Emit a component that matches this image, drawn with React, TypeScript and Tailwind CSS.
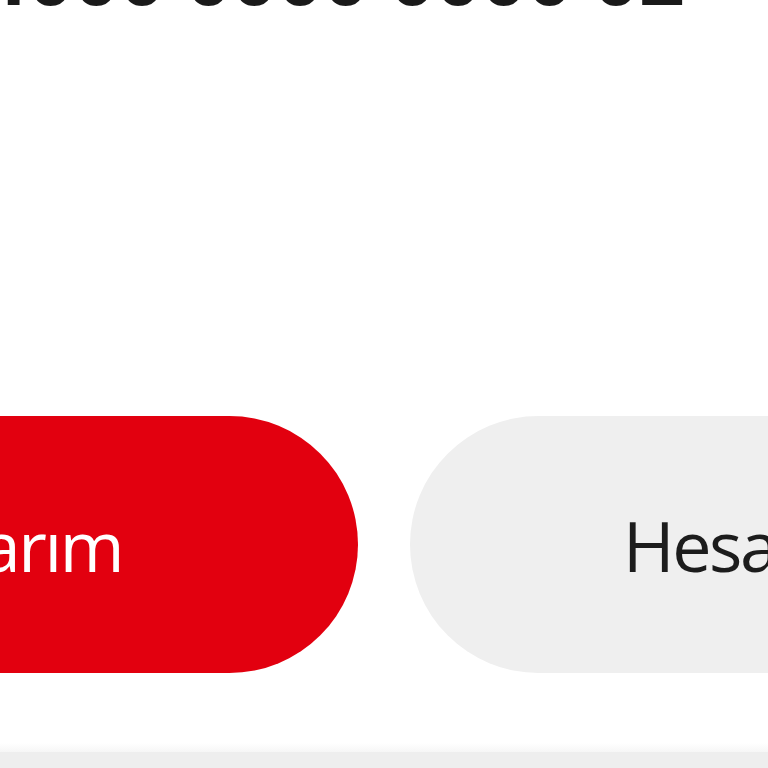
import React, { FC } from 'react'

const PillButton: FC<{
  label: string
  variant: 'primary' | 'secondary'
  className?: string
}> = ({ label, variant, className = '' }) => {
  const tone =
    variant === 'primary'
      ? 'bg-[#e2000f] text-white justify-end pr-[236px]'
      : 'bg-[#efefef] text-[#1c1c1c] justify-start pl-[213px]'
  return (
    <button
      type="button"
      className={`flex items-center shrink-0 h-[257px] w-[600px] rounded-full text-[70px] font-normal tracking-[-0.035em] leading-none whitespace-nowrap ${tone} ${className}`}
    >
      {label}
    </button>
  )
}

const App: FC = () => {
  return (
    <div
      className="relative w-[768px] h-[768px] overflow-hidden bg-white"
      style={{ fontFamily: '"Open Sans", "Noto Sans", sans-serif' }}
    >
      <div className="-mt-[66px] -ml-[18px] text-[80px] font-bold leading-none whitespace-nowrap text-[#1a1a1a]">
        4000 0000 0000 02
      </div>

      <div className="flex gap-[52px] -ml-[242px] mt-[402px]">
        <PillButton label="Kartlarım" variant="primary" />
        <PillButton label="Hesap Detayı" variant="secondary" />
      </div>

      <div className="mt-[70px] h-[9px] bg-gradient-to-b from-white to-[#f6f6f6]" />
      <div className="h-[20px] bg-[#eeeeee]" />
    </div>
  )
}

export default App
